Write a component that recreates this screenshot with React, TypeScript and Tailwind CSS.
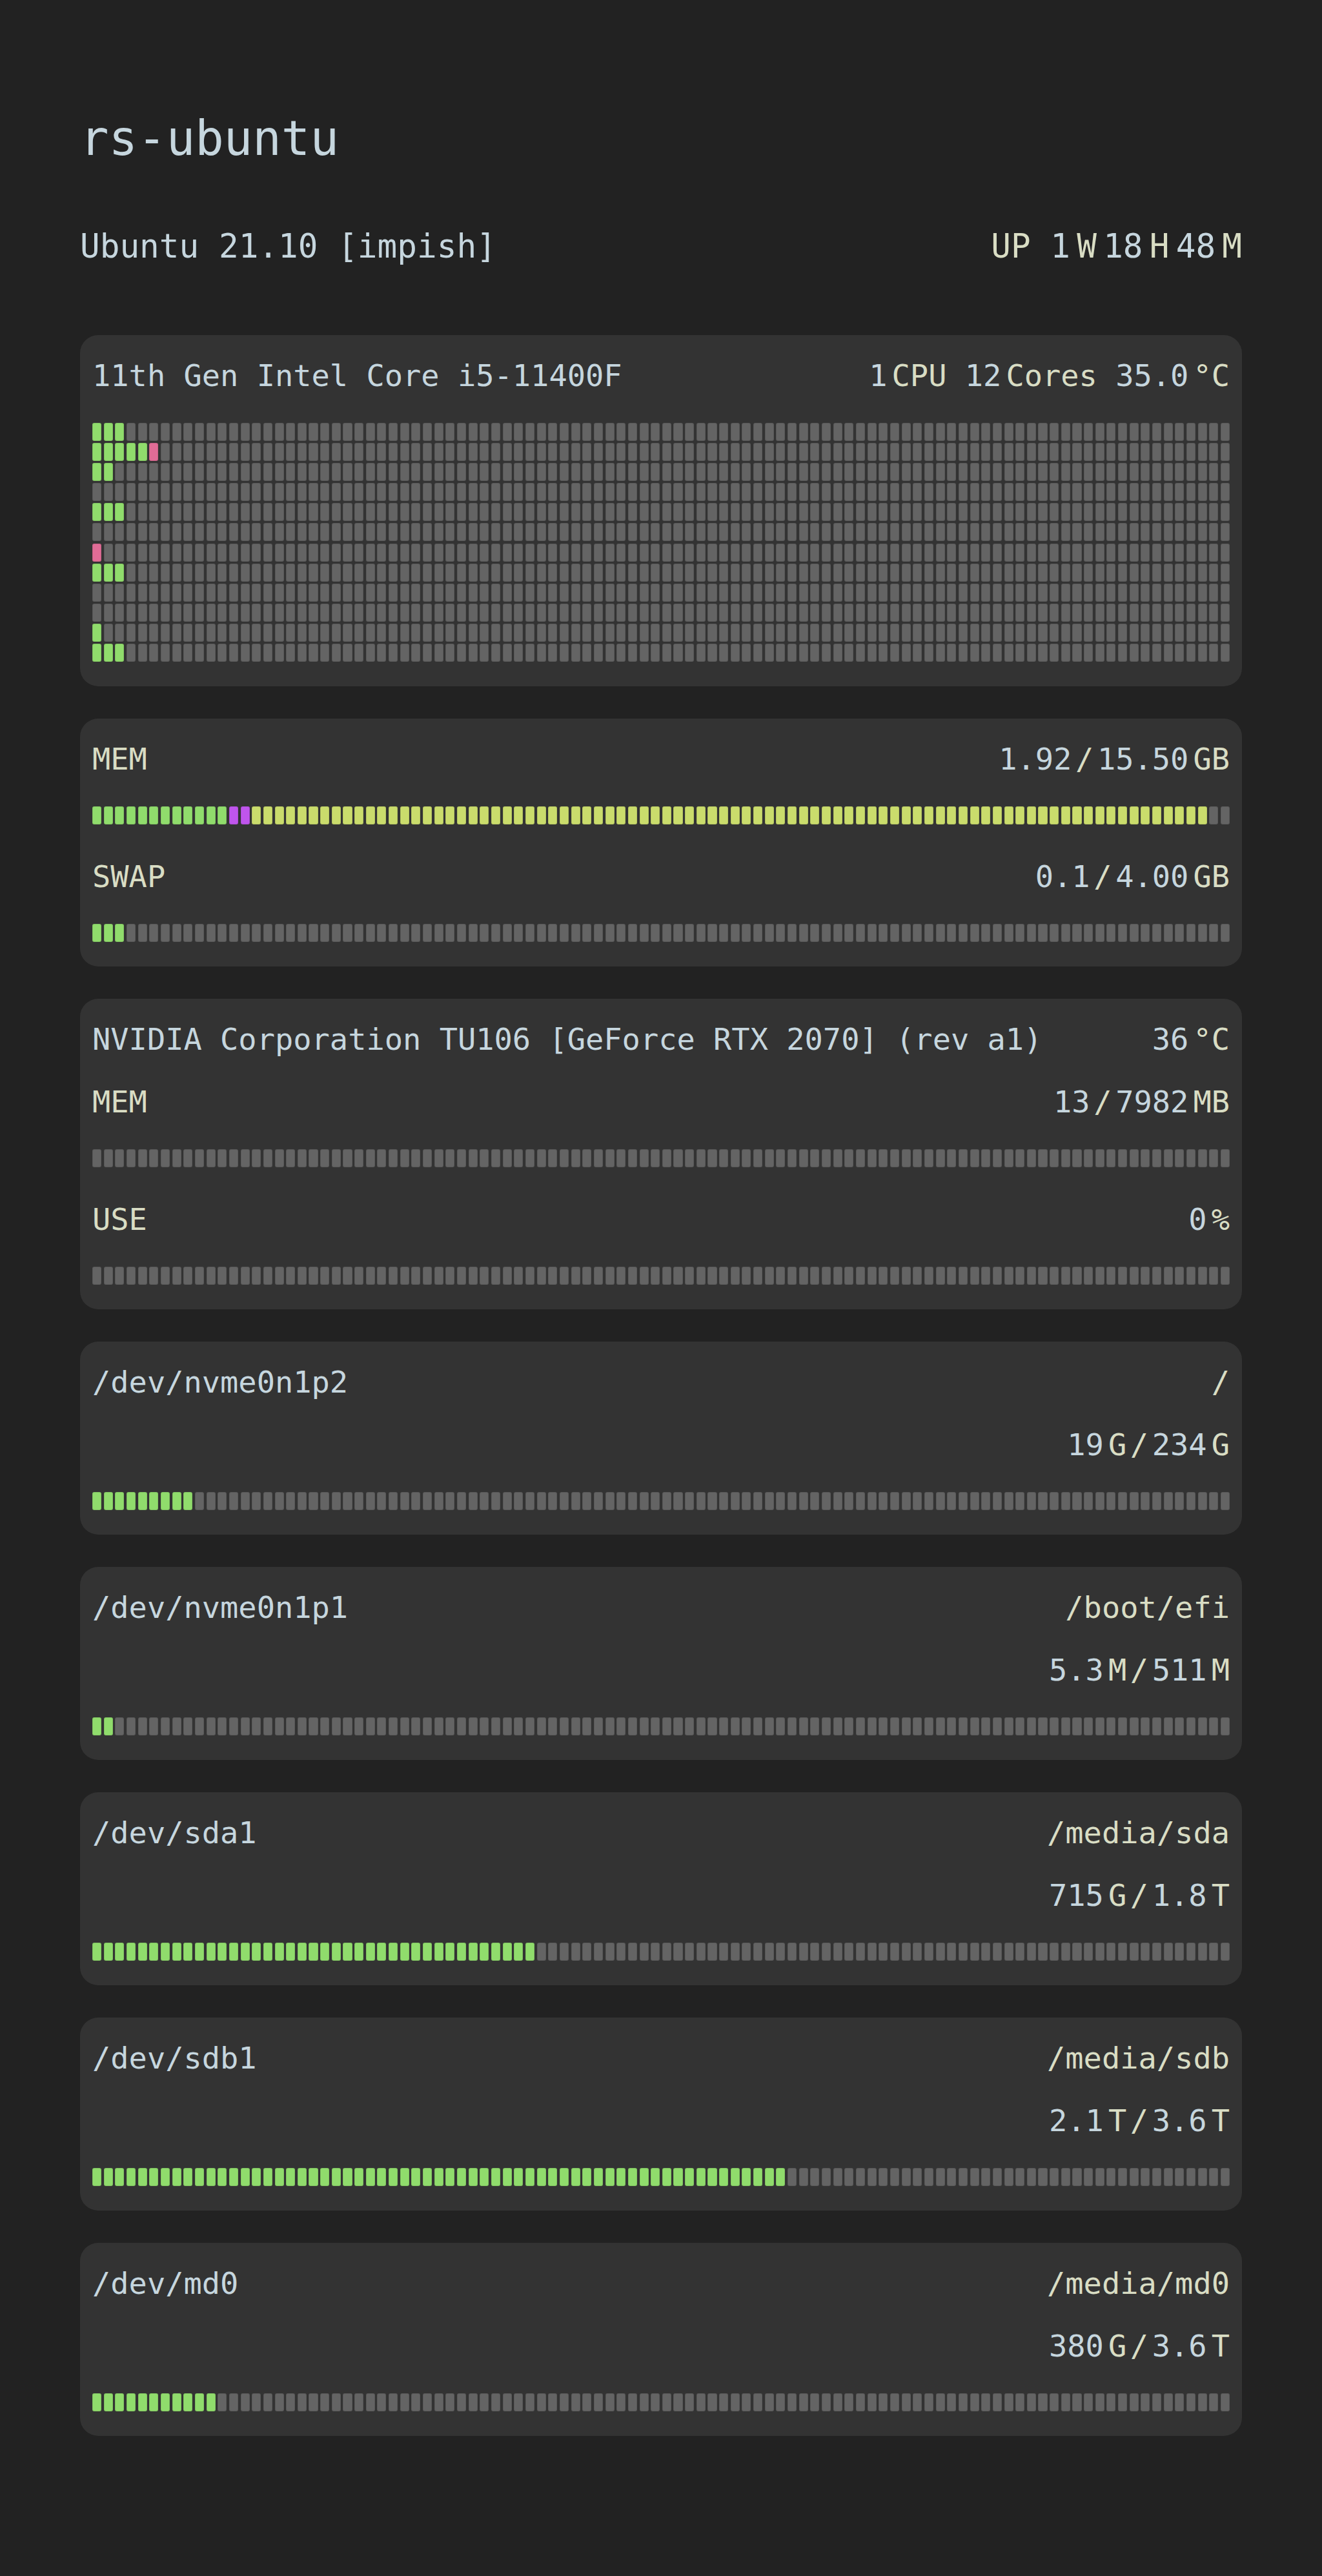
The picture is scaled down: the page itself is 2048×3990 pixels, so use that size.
const BLUE = "text-[#c6d6de]";
const BEIGE = "text-[#d9ddc4]";

const GREEN = "bg-[#90dc6c]";
const PINK = "bg-[#e06c96]";
const PURPLE = "bg-[#bf55ec]";
const YELLOW = "bg-[#cadc6c]";
const EMPTY = "bg-[#646464]";

type Seg = { n: number; c: string };

function Bar({ segs, className = "" }: { segs: Seg[]; className?: string }) {
  const cells: string[] = [];
  segs.forEach((s) => {
    for (let i = 0; i < s.n; i++) cells.push(s.c);
  });
  while (cells.length < 100) cells.push(EMPTY);
  return (
    <div className={`flex h-[28px] gap-[3.6px] ${className}`}>
      {cells.map((c, i) => (
        <div key={i} className={`flex-1 rounded-[3px] border border-black/10 ${c}`} />
      ))}
    </div>
  );
}

// number in blue, unit in beige
function V({ children }: { children: React.ReactNode }) {
  return <span className={BLUE}>{children}</span>;
}

function U({ children }: { children: React.ReactNode }) {
  return <span className={`${BEIGE} ml-[0.15em]`}>{children}</span>;
}

function Slash() {
  return <span className={`${BEIGE} mx-[0.12em]`}>/</span>;
}

function Line({ left, right, className = "" }: { left?: React.ReactNode; right?: React.ReactNode; className?: string }) {
  return (
    <div className={`flex justify-between whitespace-pre leading-[70px] ${className}`}>
      <span>{left}</span>
      <span>{right}</span>
    </div>
  );
}

function Card({ children }: { children: React.ReactNode }) {
  return <div className="flex flex-col rounded-[28px] bg-[#333333] px-[19px] pb-[38px] pt-[28px]">{children}</div>;
}

const cpuRows: Seg[][] = [
  [{ n: 3, c: GREEN }],
  [{ n: 5, c: GREEN }, { n: 1, c: PINK }],
  [{ n: 2, c: GREEN }],
  [],
  [{ n: 3, c: GREEN }],
  [],
  [{ n: 1, c: PINK }],
  [{ n: 3, c: GREEN }],
  [],
  [],
  [{ n: 1, c: GREEN }],
  [{ n: 3, c: GREEN }],
];

const disks = [
  { dev: "/dev/nvme0n1p2", mount: "/", used: "19", uu: "G", total: "234", tu: "G", cells: 9 },
  { dev: "/dev/nvme0n1p1", mount: "/boot/efi", used: "5.3", uu: "M", total: "511", tu: "M", cells: 2 },
  { dev: "/dev/sda1", mount: "/media/sda", used: "715", uu: "G", total: "1.8", tu: "T", cells: 39 },
  { dev: "/dev/sdb1", mount: "/media/sdb", used: "2.1", uu: "T", total: "3.6", tu: "T", cells: 61 },
  { dev: "/dev/md0", mount: "/media/md0", used: "380", uu: "G", total: "3.6", tu: "T", cells: 11 },
];

export default function App() {
  return (
    <div className="min-h-screen bg-[#222222] px-[124px] pb-[217px] pt-[159px] font-['DejaVu_Sans_Mono',monospace]">
      <h1 className={`text-[74px] font-normal leading-[111px] ${BLUE}`}>rs-ubuntu</h1>

      <div className="mt-[74px] flex justify-between whitespace-pre text-[51px] leading-[76px]">
        <span className={BLUE}>Ubuntu 21.10 [impish]</span>
        <span>
          <span className={BEIGE}>UP </span>
          <V>1</V>
          <span className={`${BEIGE} mx-[0.2em]`}>W</span>
          <V>18</V>
          <span className={`${BEIGE} mx-[0.2em]`}>H</span>
          <V>48</V>
          <span className={`${BEIGE} ml-[0.2em]`}>M</span>
        </span>
      </div>

      <div className="mt-[99px] flex flex-col gap-[50px] text-[47px]">
        {/* cpu */}
        <Card>
          <Line
            left={<span className={BLUE}>11th Gen Intel Core i5-11400F</span>}
            right={
              <>
                <V>1</V>
                <U>CPU</U> <V>12</V>
                <U>Cores</U> <V>35.0</V>
                <U>°C</U>
              </>
            }
          />
          <div className="mt-[38px] flex flex-col gap-[3.1px]">
            {cpuRows.map((r, i) => (
              <Bar key={i} segs={r} />
            ))}
          </div>
        </Card>

        {/* memory */}
        <Card>
          <Line
            left={<span className={BEIGE}>MEM</span>}
            right={
              <>
                <V>1.92</V>
                <Slash />
                <V>15.50</V>
                <U>GB</U>
              </>
            }
          />
          <Bar
            className="mt-[38px]"
            segs={[
              { n: 12, c: GREEN },
              { n: 2, c: PURPLE },
              { n: 84, c: YELLOW },
            ]}
          />
          <Line
            className="mt-[46px]"
            left={<span className={BEIGE}>SWAP</span>}
            right={
              <>
                <V>0.1</V>
                <Slash />
                <V>4.00</V>
                <U>GB</U>
              </>
            }
          />
          <Bar className="mt-[38px]" segs={[{ n: 3, c: GREEN }]} />
        </Card>

        {/* gpu */}
        <Card>
          <Line
            left={<span className={BLUE}>NVIDIA Corporation TU106 [GeForce RTX 2070] (rev a1)</span>}
            right={
              <>
                <V>36</V>
                <U>°C</U>
              </>
            }
          />
          <Line
            className="mt-[27px]"
            left={<span className={BEIGE}>MEM</span>}
            right={
              <>
                <V>13</V>
                <Slash />
                <V>7982</V>
                <U>MB</U>
              </>
            }
          />
          <Bar className="mt-[38px]" segs={[]} />
          <Line
            className="mt-[46px]"
            left={<span className={BEIGE}>USE</span>}
            right={
              <>
                <V>0</V>
                <U>%</U>
              </>
            }
          />
          <Bar className="mt-[38px]" segs={[]} />
        </Card>

        {disks.map((d) => (
          <Card key={d.dev}>
            <Line left={<span className={BLUE}>{d.dev}</span>} right={<span className={BEIGE}>{d.mount}</span>} />
            <Line
              className="mt-[27px]"
              right={
                <>
                  <V>{d.used}</V>
                  <U>{d.uu}</U>
                  <Slash />
                  <V>{d.total}</V>
                  <U>{d.tu}</U>
                </>
              }
            />
            <Bar className="mt-[38px]" segs={[{ n: d.cells, c: GREEN }]} />
          </Card>
        ))}
      </div>
    </div>
  );
}
